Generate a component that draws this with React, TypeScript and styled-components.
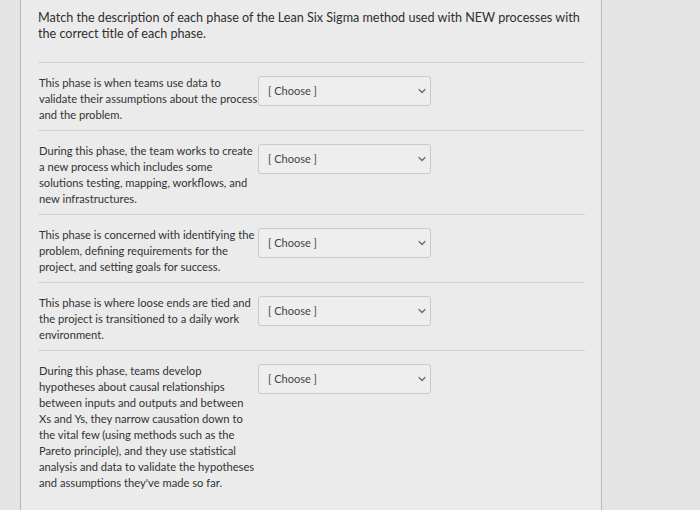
import React from 'react'
import styled, { createGlobalStyle } from 'styled-components'

const phases = [
  'This phase is when teams use data to validate their assumptions about the process and the problem.',
  'During this phase, the team works to create a new process which includes some solutions testing, mapping, workflows, and new infrastructures.',
  'This phase is concerned with identifying the problem, defining requirements for the project, and setting goals for success.',
  'This phase is where loose ends are tied and the project is transitioned to a daily work environment.',
  "During this phase, teams develop hypotheses about causal relationships between inputs and outputs and between Xs and Ys, they narrow causation down to the vital few (using methods such as the Pareto principle), and they use statistical analysis and data to validate the hypotheses and assumptions they've made so far.",
]

const Chevron = () => (
  <svg width="8" height="6" viewBox="0 0 8 6" fill="none">
    <path d="M1 1.5L4 4.5L7 1.5" stroke="#6f6f6f" strokeWidth="1.3" strokeLinecap="round" />
  </svg>
)

export default function App() {
  return (
    <>
      <GlobalStyle />
      <Page>
        <Card>
          {/* Question text */}
          <Question>
            Match the description of each phase of the Lean Six Sigma method used with NEW processes with
            the correct title of each phase.
          </Question>

          <Answers>
            {phases.map((text, i) => (
              <Row key={i} $last={i === phases.length - 1}>
                <Description>{text}</Description>
                <Select>
                  <span>[ Choose ]</span>
                  <Chevron />
                </Select>
              </Row>
            ))}
          </Answers>
        </Card>
      </Page>
    </>
  )
}

const GlobalStyle = createGlobalStyle`
  html, body {
    margin: 0;
    background: #e4e4e4;
    font-family: Lato, "Open Sans", sans-serif;
    color: #333;
  }
`

const Page = styled.div`
  padding-left: 20px;
  height: 510px;
  overflow: hidden;
`

const Card = styled.div`
  width: 563px;
  min-height: 510px;
  padding: 10px 0 0 17px;
  background: #ebebeb;
  border-left: 1px solid #b7b7b7;
  border-right: 1px solid #b7b7b7;
`

const Question = styled.p`
  margin: 0 0 20px;
  width: 548px;
  font-size: 12.6px;
  line-height: 16px;
  color: #2f2f2f;
`

const Answers = styled.div`
  width: 547px;
  border-top: 1px solid #d2d2d2;
`

const Row = styled.div<{ $last?: boolean }>`
  display: flex;
  align-items: flex-start;
  padding: 12px 0 7px 1px;
  border-bottom: ${p => (p.$last ? 'none' : '1px solid #d2d2d2')};
`

const Description = styled.div`
  width: 219px;
  font-size: 11.2px;
  line-height: 16px;
  color: #333;
`

const Select = styled.div`
  display: flex;
  align-items: center;
  justify-content: space-between;
  box-sizing: border-box;
  width: 173px;
  height: 30px;
  margin-top: 1px;
  padding: 0 4px 2px 9px;
  background: #eeeeee;
  border: 1px solid #c9c9c9;
  border-radius: 3px;
  font-size: 11px;
  color: #444;

  svg {
    margin-top: 2px;
  }
`
